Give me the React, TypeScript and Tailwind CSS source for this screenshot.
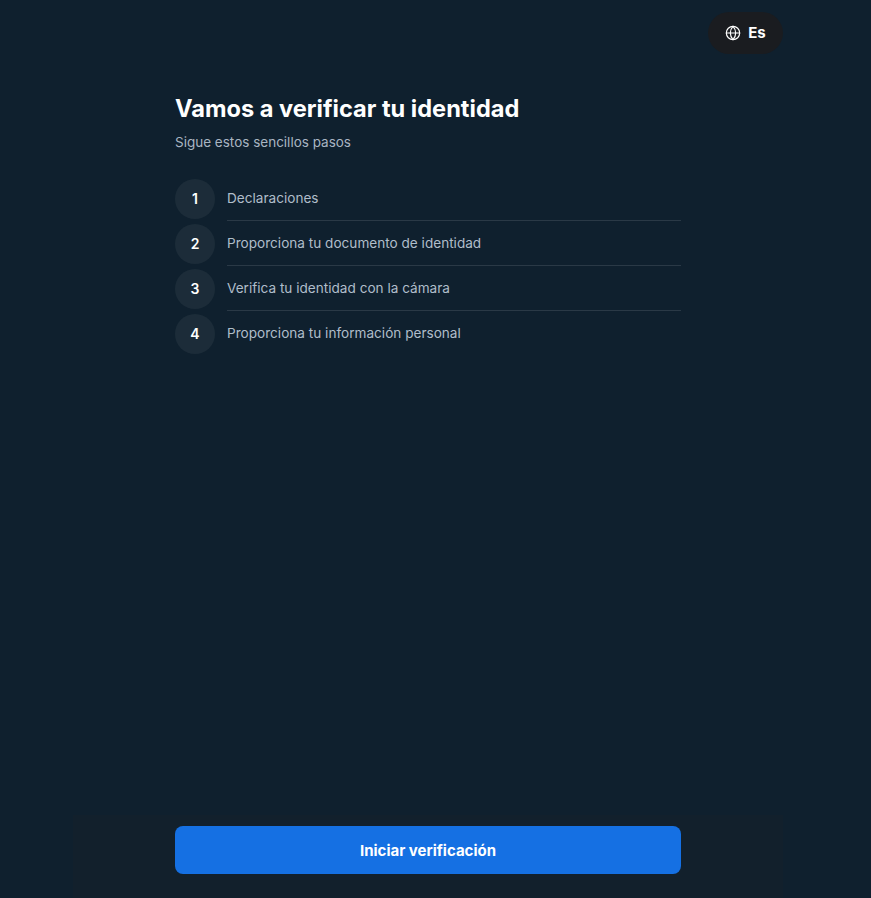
import { Globe } from "lucide-react";

const steps = [
  "Declaraciones",
  "Proporciona tu documento de identidad",
  "Verifica tu identidad con la cámara",
  "Proporciona tu información personal",
];

export default function App() {
  return (
    <div className="flex h-screen flex-col bg-[#0f202e] pr-[15px] font-['Inter',sans-serif] text-white">
      <header className="flex justify-end pt-3 pr-[73px]">
        <button className="flex h-[42px] w-[75px] items-center justify-center gap-[7px] rounded-full bg-[#1a1c20] text-[15px] font-bold">
          <Globe className="h-4 w-4" strokeWidth={1.75} />
          Es
        </button>
      </header>

      <main className="mx-auto mt-[40px] w-[506px] flex-1">
        <h1 className="text-[23.6px] leading-[30px] font-bold">Vamos a verificar tu identidad</h1>
        <p className="mt-2 text-[13.5px] leading-5 text-[#a9b5c2]">Sigue estos sencillos pasos</p>

        <ol className="mt-[27px]">
          {steps.map((step, index) => (
            <li key={step} className="flex h-[45px] items-start gap-3">
              <span className="flex h-10 w-10 shrink-0 items-center justify-center rounded-full bg-[#1c2c39] text-sm font-semibold">
                {index + 1}
              </span>
              <span
                className={`h-[42px] flex-1 pt-[9px] text-[13.6px] leading-5 text-[#b0bdca] ${
                  index < steps.length - 1 ? "border-b border-[#2a3946]" : ""
                }`}
              >
                {step}
              </span>
            </li>
          ))}
        </ol>
      </main>

      <footer className="mx-auto w-[710px] bg-[#12202c] pt-[11px] pb-6">
        <button className="mx-auto block h-12 w-[506px] rounded-lg bg-[#1570e3] pt-0.5 text-[15px] font-bold">
          Iniciar verificación
        </button>
      </footer>
    </div>
  );
}
